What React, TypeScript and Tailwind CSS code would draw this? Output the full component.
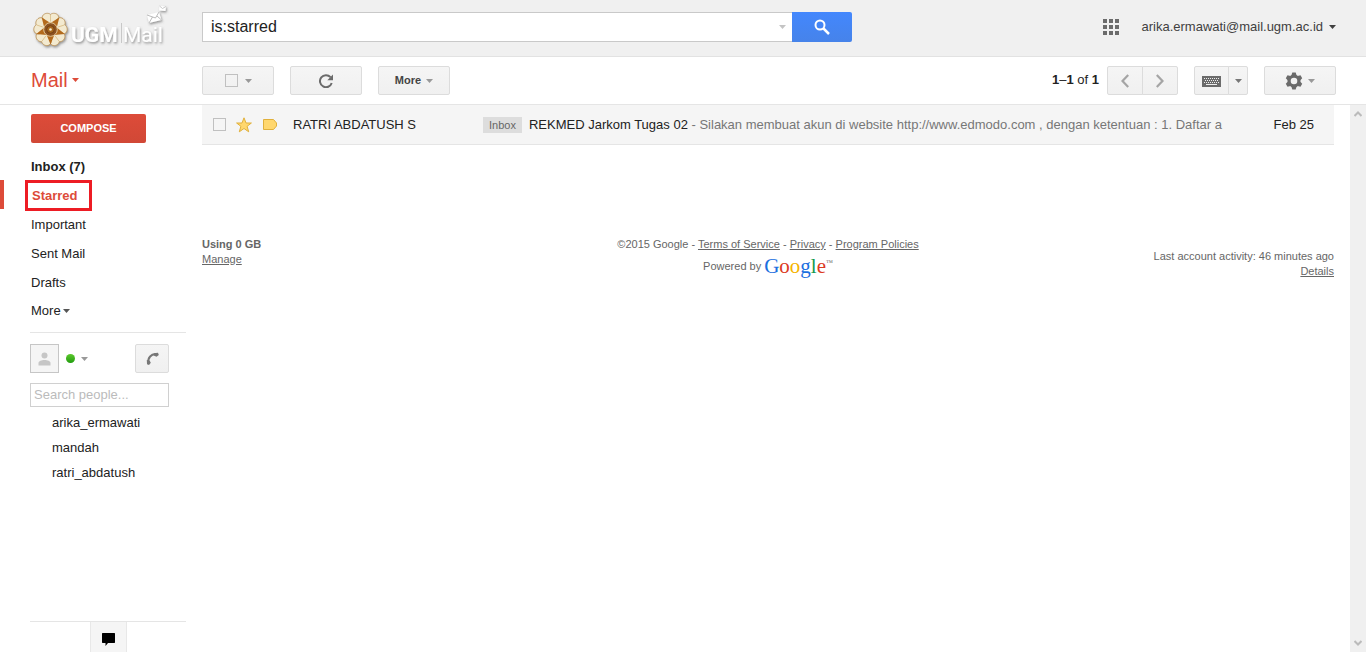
import React from "react";

type Mail = {
  id: number;
  sender: string;
  label: string;
  subject: string;
  snippet: string;
  date: string;
};

const mails: Mail[] = [
  {
    id: 1,
    sender: "RATRI ABDATUSH S",
    label: "Inbox",
    subject: "REKMED Jarkom Tugas 02",
    snippet:
      "Silakan membuat akun di website http://www.edmodo.com , dengan ketentuan : 1. Daftar a",
    date: "Feb 25",
  },
];

const folders = [
  { name: "Inbox (7)", bold: true },
  { name: "Starred", active: true },
  { name: "Important" },
  { name: "Sent Mail" },
  { name: "Drafts" },
];

const contacts = ["arika_ermawati", "mandah", "ratri_abdatush"];

const buttonStyle =
  "flex h-[29px] items-center justify-center rounded-[2px] border border-[#dcdcdc] bg-linear-to-b from-[#f5f5f5] to-[#f0f0f0] text-[#777]";

const checkboxStyle =
  "block size-[13px] shrink-0 appearance-none border border-[#c0c0c0] bg-transparent";

const Caret: React.FC<{ className?: string }> = ({ className = "" }) => (
  <svg
    viewBox="0 0 7 4"
    className={`h-1 w-[7px] shrink-0 ${className}`}
    fill="currentColor"
    aria-hidden="true"
  >
    <path d="M0 0h7L3.500 4z" />
  </svg>
);

const petals = [0, 72, 144, 216, 288];

const Logo = () => (
  <svg viewBox="0 0 140 46" className="h-[46px] w-[140px]" role="img" aria-label="UGM Mail">
    <defs>
      <filter id="logoShadow" x="-10%" y="-20%" width="125%" height="150%">
        <feDropShadow dx="1" dy="1.5" stdDeviation="1" floodColor="#555" floodOpacity="0.6" />
      </filter>
    </defs>
    <g filter="url(#logoShadow)">
      <g transform="translate(20.5 25.5)">
        <circle r="13" fill="#b98238" />
        {petals.map((angle) => (
          <g key={angle} transform={`rotate(${angle})`}>
            <path
              d="M0 -4C-6 -6 -9.500 -10 -8 -13.500C-6.500 -16.500 -2 -17 0 -15C2 -17 6.500 -16.500 8 -13.500C9.500 -10 6 -6 0 -4Z"
              fill="#f3ead0"
              stroke="#b58a4c"
              strokeWidth="0.7"
            />
            <path d="M0 -14.500V-8" stroke="#d8bd86" strokeWidth="0.8" />
          </g>
        ))}
        <path
          transform="rotate(180)"
          d="M0 -15L3.800 -5.600L14.200 -4.600L6.300 2L8.800 12.100L0 6.600L-8.800 12.100L-6.300 2L-14.200 -4.600L-3.800 -5.600Z"
          fill="#b36a1c"
        />
        <circle r="6.800" fill="#8d5320" stroke="#e9d3a4" strokeWidth="0.9" />
        <circle r="3.800" fill="#a4651f" stroke="#6a3a12" strokeWidth="0.8" />
        <circle r="1.300" fill="#f8edd0" />
      </g>
    </g>
    <g filter="url(#logoShadow)" fill="#fff" fontFamily="Roboto, 'Liberation Sans', sans-serif">
      <text x="41" y="38" fontSize="21" fontWeight="700">
        UGM
      </text>
      <text x="93" y="38" fontSize="21">
        Mail
      </text>
    </g>
    <path d="M91.500 19V39" stroke="#c8c8c8" />
    <g filter="url(#logoShadow)">
      <path d="M117 11L129 8L131.500 16L119 19Z" fill="#fff" />
      <path
        d="M117 11L125.500 14L129 8M119 19L122.500 13M131.500 16L127 12"
        fill="none"
        stroke="#aaa"
        strokeWidth="0.8"
      />
      <path d="M129.500 2L136 2.500L135.500 7L129 6.500Z" fill="#fff" />
      <path d="M129.500 2L132.500 4.500L136 2.500" fill="none" stroke="#bbb" strokeWidth="0.8" />
    </g>
  </svg>
);

const SearchIcon = () => (
  <svg viewBox="0 0 16 16" className="size-4" fill="none" stroke="#fff" aria-hidden="true">
    <circle cx="6" cy="6" r="4.500" strokeWidth="2" />
    <path d="M9.500 9.500L15 15" strokeWidth="2.500" />
  </svg>
);

const AppsIcon = () => (
  <svg viewBox="0 0 16 16" className="size-4" fill="#6b6b6b" aria-hidden="true">
    {[0, 6, 12].map((y) => (
      <path key={y} d={`M0 ${y}h4v4h-4zM6 ${y}h4v4h-4zM12 ${y}h4v4h-4z`} />
    ))}
  </svg>
);

const RefreshIcon = () => (
  <svg viewBox="0 0 14 14" className="size-3.5" aria-hidden="true">
    <path d="M11.500 3.200A6 6 0 1 0 12.700 9" fill="none" stroke="#6b6b6b" strokeWidth="2" />
    <path d="M14 0.500V6.200H8.300Z" fill="#6b6b6b" />
  </svg>
);

const KeyboardIcon = () => (
  <svg viewBox="0 0 19 11" className="h-[11px] w-[19px]" aria-hidden="true">
    <path d="M0 0h19v11H0z" fill="#6b6b6b" />
    <path
      d="M2 2.500H17M3 4.500H17M2 6.500H17"
      stroke="#eee"
      strokeDasharray="1 1"
    />
    <path d="M4 8.500H15" stroke="#eee" />
  </svg>
);

const GearIcon = () => (
  <svg viewBox="0 0 18 18" className="size-[18px]" aria-hidden="true">
    <g fill="#6b6b6b" transform="translate(9 9)">
      <path
        fillRule="evenodd"
        d="M0 -6.500A6.500 6.500 0 1 0 0 6.500A6.500 6.500 0 1 0 0 -6.500ZM0 -3.300A3.300 3.300 0 1 1 0 3.300A3.300 3.300 0 1 1 0 -3.300Z"
      />
      {[0, 60, 120, 180, 240, 300].map((angle) => (
        <path key={angle} transform={`rotate(${angle})`} d="M-2.600 -5.500L-1.700 -8.500H1.700L2.600 -5.500Z" />
      ))}
    </g>
  </svg>
);

const StarIcon = () => (
  <svg viewBox="0 0 16 16" className="size-4" aria-hidden="true">
    <path
      d="M8 0.800L10 6H15.400L11.100 9.300L12.700 14.800L8 11.500L3.300 14.800L4.900 9.300L0.600 6H6Z"
      fill="#ffd76e"
      stroke="#e0b03c"
    />
  </svg>
);

const TagIcon = () => (
  <svg viewBox="0 0 14 11" className="h-[11px] w-3.5" aria-hidden="true">
    <path d="M0.500 0.500H10.500L13.500 4V7L10.500 10.500H0.500Z" fill="#ffd76e" stroke="#e0b03c" />
  </svg>
);

const GoogleLogo = () => (
  <span
    className="flex items-start font-['Liberation_Serif',serif] text-[21px] leading-[21px]"
    aria-label="Google"
  >
    <span className="text-[#1b6fe0]">G</span>
    <span className="text-[#dc3a23]">o</span>
    <span className="text-[#f5b400]">o</span>
    <span className="text-[#1b6fe0]">g</span>
    <span className="text-[#149a4c]">l</span>
    <span className="text-[#dc3a23]">e</span>
    <span className="text-[7px] leading-[14px] text-[#666]">™</span>
  </span>
);

const Header = () => (
  <header className="flex h-[57px] shrink-0 items-center border-b border-[#e2e2e2] bg-[#f0f0f0] pr-[30px] pb-0.5">
    <a href="#" className="w-[202px] shrink-0 pl-[30px]">
      <Logo />
    </a>
    <form className="flex h-[30px] w-full max-w-[650px]">
      <div className="flex flex-1 items-center border border-r-0 border-[#c9c9c9] bg-white pr-1.5">
        <input
          type="text"
          aria-label="Search mail"
          defaultValue="is:starred"
          className="min-w-0 flex-1 bg-transparent pl-2 text-base text-[#222] outline-none"
        />
        <button type="button" aria-label="Search options">
          <Caret className="text-[#c4c4c4]" />
        </button>
      </div>
      <button
        type="button"
        aria-label="Search"
        className="flex w-[60px] items-center justify-center rounded-r-[2px] bg-linear-to-b from-[#4387fd] to-[#4683ea]"
      >
        <SearchIcon />
      </button>
    </form>
    <div className="ml-auto flex shrink-0 items-center gap-[22px]">
      <button type="button" aria-label="Apps">
        <AppsIcon />
      </button>
      <button type="button" className="flex items-center gap-1.5 text-[#404040]">
        arika.ermawati@mail.ugm.ac.id
        <Caret />
      </button>
    </div>
  </header>
);

const Toolbar = () => (
  <div className="flex h-12 shrink-0 items-center border-b border-[#e5e5e5] pr-[30px]">
    <div className="w-[202px] shrink-0 pb-0.5 pl-[31px]">
      <button type="button" className="flex items-center gap-1 text-xl text-[#dd4b39]">
        Mail
        <Caret />
      </button>
    </div>
    <div className="flex gap-4">
      <div className={`${buttonStyle} w-[72px] gap-[7px]`}>
        <input type="checkbox" aria-label="Select all" className={checkboxStyle} />
        <button type="button" aria-label="Select">
          <Caret className="text-[#999]" />
        </button>
      </div>
      <button type="button" aria-label="Refresh" className={`${buttonStyle} w-[72px]`}>
        <RefreshIcon />
      </button>
      <button type="button" className={`${buttonStyle} w-[72px] gap-[5px] text-[11px] font-bold`}>
        <span className="text-[#444]">More</span>
        <Caret className="text-[#999]" />
      </button>
    </div>
    <div className="ml-auto flex items-center gap-4">
      <div className="flex items-center gap-2">
        <span className="pb-0.5">
          <b>1</b>–<b>1</b> of <b>1</b>
        </span>
        <div className="flex">
          <button type="button" aria-label="Newer" className={`${buttonStyle} w-9 rounded-r-none`}>
            <svg viewBox="0 0 8 14" className="h-3.5 w-2" fill="none" stroke="#a5a5a5" strokeWidth="2.200">
              <path d="M7.200 1L1.500 7L7.200 13" />
            </svg>
          </button>
          <button type="button" aria-label="Older" className={`${buttonStyle} w-9 rounded-l-none -ml-px`}>
            <svg viewBox="0 0 8 14" className="h-3.5 w-2" fill="none" stroke="#a5a5a5" strokeWidth="2.200">
              <path d="M0.800 1L6.500 7L0.800 13" />
            </svg>
          </button>
        </div>
      </div>
      <div className="flex">
        <button type="button" aria-label="Input tools" className={`${buttonStyle} w-[35px] rounded-r-none pt-0.5`}>
          <KeyboardIcon />
        </button>
        <button type="button" aria-label="Select input tool" className={`${buttonStyle} -ml-px w-5 rounded-l-none`}>
          <Caret />
        </button>
      </div>
      <button type="button" aria-label="Settings" className={`${buttonStyle} w-[72px] gap-[5px]`}>
        <GearIcon />
        <Caret className="text-[#999]" />
      </button>
    </div>
  </div>
);

const Chat = () => (
  <section aria-label="Chat" className="mr-4 ml-[30px] border-t border-[#e5e5e5] pt-[11px]">
    <div className="mr-[17px] flex items-center">
      <button
        type="button"
        aria-label="Profile"
        className="flex size-[29px] items-end justify-center border border-[#c6c6c6] bg-[#f5f5f5] pb-1.5"
      >
        <svg viewBox="0 0 13 14" className="h-3.5 w-[13px]" fill="#c6c6c6">
          <circle cx="6.500" cy="3.500" r="3" />
          <path d="M0.500 13.500V11C0.500 9 3.500 8 6.500 8S12.500 9 12.500 11V13.500Z" />
        </svg>
      </button>
      <button type="button" aria-label="Status: available" className="ml-[7px] flex items-center gap-1.5">
        <span className="size-[9px] rounded-full bg-linear-to-b from-[#5cc92c] to-[#1d9c0e]" />
        <Caret className="text-[#999]" />
      </button>
      <button type="button" aria-label="Call phone" className={`${buttonStyle} ml-auto w-[34px]`}>
        <svg viewBox="0 0 13 13" className="size-[13px]">
          <path d="M2.500 11C1.500 6 5 1.500 11 2.500" fill="none" stroke="#777" strokeWidth="2" />
          <path d="M7.500 1.200L12 0.800L12.800 3L10.500 4.800L8.200 3.800Z" fill="#777" />
          <path d="M0.800 8L1 12.200L3 13L4.800 10.800L3.600 8.400Z" fill="#777" />
        </svg>
      </button>
    </div>
    <div className="mt-2.5 mr-[17px]">
      <input
        type="text"
        aria-label="Search people"
        placeholder="Search people..."
        className="block h-6 w-full border border-[#d0d0d0] px-[3px] pb-0.5 placeholder:text-[#bbb] outline-none"
      />
    </div>
    <ul className="pt-[3px] pl-[22px]">
      {contacts.map((contact) => (
        <li key={contact} className="leading-[25px]">
          <a href="#">{contact}</a>
        </li>
      ))}
    </ul>
  </section>
);

const Sidebar = () => (
  <aside className="flex w-[202px] shrink-0 flex-col">
    <div className="pt-[9px] pl-[31px]">
      <button
        type="button"
        className="h-[29px] w-[115px] rounded-[2px] bg-linear-to-b from-[#dd4b39] to-[#d14836] text-[11px] font-bold text-white"
      >
        COMPOSE
      </button>
    </div>
    <nav className="mt-2 mb-[7px]">
      {folders.map((folder) => (
        <a
          key={folder.name}
          href="#"
          className={`relative block h-[29px] leading-8 ${
            folder.active
              ? "border-l-4 border-[#dd4b39] pl-7 font-bold text-[#dd4b39]"
              : "pl-[31px]"
          } ${folder.bold ? "font-bold" : ""}`}
        >
          {folder.name}
          {folder.active && (
            <span className="absolute top-0 left-[21px] h-[31px] w-[67px] border-3 border-[#ed1c24]" />
          )}
        </a>
      ))}
      <button type="button" className="flex h-[29px] items-center gap-0.5 pl-[31px]">
        More
        <Caret className="text-[#555]" />
      </button>
    </nav>
    <Chat />
    <div className="mt-auto mr-4 ml-[30px] flex justify-center border-t border-[#e5e5e5]">
      <button
        type="button"
        aria-label="Conversations"
        className="flex h-[30px] w-[37px] items-center justify-center border-x border-[#e8e8e8] bg-[#f5f5f5] pt-1"
      >
        <svg viewBox="0 0 13 13" className="size-[13px]">
          <path d="M0.500 0H12.500L13 0.500V9.500L12.500 10H6L3.500 13V10H0.500L0 9.500V0.500Z" fill="#000" />
        </svg>
      </button>
    </div>
  </aside>
);

const MailRow: React.FC<{ mail: Mail }> = ({ mail }) => (
  <li className="flex h-10 items-center border-b border-[#e5e5e5] bg-[#f5f5f5] pr-5 pl-[11px]">
    <input type="checkbox" aria-label={`Select ${mail.subject}`} className={checkboxStyle} />
    <button type="button" aria-label="Starred" className="ml-2.5 shrink-0">
      <StarIcon />
    </button>
    <button type="button" aria-label="Important" className="ml-[11px] shrink-0">
      <TagIcon />
    </button>
    <span className="ml-4 w-[190px] shrink-0 truncate">{mail.sender}</span>
    <span className="mr-[7px] h-4 shrink-0 bg-[#ddd] px-1.5 text-[11px] leading-4 text-[#666]">
      {mail.label}
    </span>
    <a href="#" className="min-w-0 flex-1 overflow-hidden whitespace-nowrap">
      {mail.subject}
      <span className="text-[#777]"> - {mail.snippet}</span>
    </a>
    <span className="ml-4 shrink-0">{mail.date}</span>
  </li>
);

const Footer = () => (
  <footer className="mt-[92px] grid grid-cols-[1fr_auto_1fr] text-[11px] leading-[15px] text-[#666]">
    <div>
      <p className="font-bold">Using 0 GB</p>
      <a href="#" className="underline">
        Manage
      </a>
    </div>
    <div className="flex flex-col items-center">
      <p>
        ©2015 Google -{" "}
        <a href="#" className="underline">
          Terms of Service
        </a>{" "}
        -{" "}
        <a href="#" className="underline">
          Privacy
        </a>{" "}
        -{" "}
        <a href="#" className="underline">
          Program Policies
        </a>
      </p>
      <div className="mt-1 flex items-center gap-[3px]">
        Powered by
        <GoogleLogo />
      </div>
    </div>
    <div className="pt-3 text-right">
      <p>Last account activity: 46 minutes ago</p>
      <a href="#" className="underline">
        Details
      </a>
    </div>
  </footer>
);

const Scrollbar = () => (
  <div className="flex w-4 shrink-0 flex-col items-center justify-between bg-[#f0f0f0] py-1.5" aria-hidden="true">
    <svg viewBox="0 0 8 6" className="h-1.5 w-2" fill="none" stroke="#bbb" strokeWidth="2">
      <path d="M0.500 5L4 1.500L7.500 5" />
    </svg>
    <svg viewBox="0 0 8 6" className="h-1.5 w-2" fill="none" stroke="#bbb" strokeWidth="2">
      <path d="M0.500 1L4 4.500L7.500 1" />
    </svg>
  </div>
);

const App = () => (
  <div className="flex h-screen flex-col bg-white font-['Liberation_Sans',Arial,sans-serif] text-[13px] text-[#222]">
    <Header />
    <Toolbar />
    <div className="flex min-h-0 flex-1">
      <Sidebar />
      <main className="min-w-0 flex-1 pr-4">
        <ul>
          {mails.map((mail) => (
            <MailRow key={mail.id} mail={mail} />
          ))}
        </ul>
        <Footer />
      </main>
      <Scrollbar />
    </div>
  </div>
);

export default App;
